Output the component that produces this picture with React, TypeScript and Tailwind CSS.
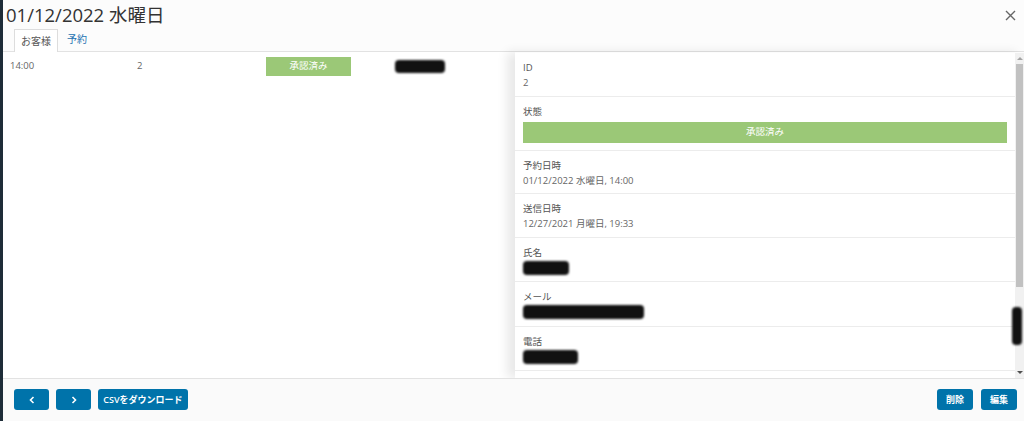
import React from "react";

const Scribble = ({ w, h, className = "" }: { w: number; h: number; className?: string }) => (
  <div
    className={`rounded-[4px] bg-[#111] blur-[1px] ${className}`}
    style={{ width: w, height: h }}
  />
);

const Field = ({ label, children }: { label: string; children: React.ReactNode }) => (
  <div className="border-b border-[#ececec] px-2 pt-[7px] pb-[5.5px]">
    <div className="h-[15px] text-[9.5px] leading-[15px] text-[#555]">{label}</div>
    <div className="h-[15px] text-[9.5px] leading-[15px] text-[#666]">{children}</div>
  </div>
);

export default function App() {
  return (
    <div className="flex h-[421px] w-[1024px] overflow-hidden bg-[#1d2327] font-['Open_Sans','Noto_Sans_CJK_JP',sans-serif]">
      <div className="w-[3px] shrink-0 bg-[#1e2c38]" />
      <div className="relative flex min-w-0 flex-1 flex-col bg-[#fcfcfc]">
        {/* header */}
        <div className="flex h-[30px] items-center justify-between pl-[3px] pr-[8px]">
          <h1 className="text-[18.5px] leading-none text-[#333]">01/12/2022 水曜日</h1>
          <svg width="11" height="11" viewBox="0 0 11 11" className="text-[#666]">
            <path d="M1 1L10 10M10 1L1 10" stroke="currentColor" strokeWidth="1.4" />
          </svg>
        </div>
        {/* tabs */}
        <div className="flex h-[22px] items-end border-b border-[#e2e2e2] pl-[11px]">
          <div className="-mb-px flex h-[23px] items-center border border-b-0 border-[#ddd] bg-white px-[6px] text-[10px] text-[#555]">
            お客様
          </div>
          <div className="flex h-[23px] items-center px-[9px] text-[10px] text-[#2271b1]">予約</div>
        </div>
        {/* main */}
        <div className="flex min-h-0 flex-1">
          <div className="flex-1 bg-white">
            <div className="grid h-[28px] grid-cols-[127px_129px_129px_1fr] items-center pl-[7px] text-[9.5px] text-[#666]">
              <span>14:00</span>
              <span>2</span>
              <div className="flex h-[19px] w-[85px] items-center justify-center bg-[#9bc877] text-[9.5px] text-white">
                承認済み
              </div>
              <Scribble w={50} h={13} />
            </div>
          </div>
          <div className="flex w-[509px] shrink-0 pt-[1px] shadow-[-8px_0_10px_rgba(0,0,0,0.09)]">
            <div className="min-w-0 flex-1 overflow-hidden bg-white">
              <Field label="ID">2</Field>
              <div className="border-b border-[#ececec] px-2 pt-[7px] pb-[7px]">
                <div className="h-[15px] text-[9.5px] leading-[15px] text-[#555]">状態</div>
                <div className="mt-[3px] flex h-[21px] items-center justify-center bg-[#9bc877] text-[9.5px] text-white">
                  承認済み
                </div>
              </div>
              <Field label="予約日時">01/12/2022 水曜日, 14:00</Field>
              <Field label="送信日時">12/27/2021 月曜日, 19:33</Field>
              <Field label="氏名">
                <Scribble w={46} h={14} className="mt-[1px]" />
              </Field>
              <Field label="メール">
                <Scribble w={121} h={14} className="mt-[1px]" />
              </Field>
              <Field label="電話">
                <Scribble w={55} h={14} className="mt-[1px]" />
              </Field>
              <Field label="お問い合わせ内容">-</Field>
            </div>
            <div className="flex w-[9px] flex-col bg-[#f1f1f1]">
              <div className="flex h-[11px] items-center justify-center">
                <div className="h-0 w-0 border-x-[3px] border-b-[3px] border-x-transparent border-b-[#a3a3a3]" />
              </div>
              <div className="mx-[1px] h-[223px] bg-[#c1c1c1]" />
              <div className="flex-1" />
              <div className="flex h-[11px] items-center justify-center">
                <div className="h-0 w-0 border-x-[3px] border-t-[3px] border-x-transparent border-t-[#505050]" />
              </div>
            </div>
          </div>
        </div>
        {/* footer */}
        <div className="flex h-[43px] items-start justify-between border-t border-[#e2e2e2] bg-[#fafafa] pt-[10px] pl-[11px] pr-[7px]">
          <div className="flex gap-[7px]">
            <button className="flex h-[21px] w-[35px] items-center justify-center rounded-[3px] bg-[#0073aa] text-white">
              <svg width="8" height="8" viewBox="0 0 8 8">
                <path d="M5.5 1L2.5 4L5.5 7" stroke="white" strokeWidth="1.6" fill="none" />
              </svg>
            </button>
            <button className="flex h-[21px] w-[35px] items-center justify-center rounded-[3px] bg-[#0073aa] text-white">
              <svg width="8" height="8" viewBox="0 0 8 8">
                <path d="M2.5 1L5.5 4L2.5 7" stroke="white" strokeWidth="1.6" fill="none" />
              </svg>
            </button>
            <button className="flex h-[21px] w-[90px] items-center justify-center rounded-[3px] bg-[#0073aa] text-[9px] font-semibold text-white">
              CSVをダウンロード
            </button>
          </div>
          <div className="flex gap-[8px]">
            <button className="flex h-[21px] w-[36px] items-center justify-center rounded-[3px] bg-[#0073aa] text-[9px] font-semibold text-white">
              削除
            </button>
            <button className="flex h-[21px] w-[36px] items-center justify-center rounded-[3px] bg-[#0073aa] text-[9px] font-semibold text-white">
              編集
            </button>
          </div>
        </div>
        <div className="absolute left-[1009px] top-[307px]">
          <Scribble w={10} h={38} />
        </div>
      </div>
    </div>
  );
}
